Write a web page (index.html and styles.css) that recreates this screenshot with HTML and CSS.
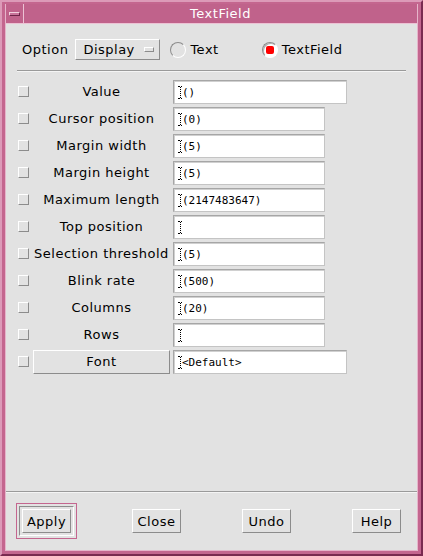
FILE: index.html
```html
<!DOCTYPE html>
<html lang="en">
<head>
    <meta charset="UTF-8">
    <title>TextField</title>
    <link rel="stylesheet" href="styles.css">
</head>
<body>
    <div class="window">
        <div class="inner">
            <div class="titlebar">
                <div class="menu-btn"><span class="menu-glyph"></span></div>
                <div class="title">TextField</div>
            </div>
            <div class="content">
                <div class="option-row">
                    <span class="option-label">Option</span>
                    <span class="option-menu">Display<span class="option-ind"></span></span>
                    <span class="radio first"></span><span class="radio-label">Text</span>
                    <span class="radio second on"><span class="radio-dot"></span></span><span class="radio-label">TextField</span>
                </div>
                <div class="sep"></div>

                <div class="rows">
                    <div class="row"><span class="check"></span><span class="label">Value</span><span class="field wide">()</span></div>
                    <div class="row"><span class="check"></span><span class="label">Cursor position</span><span class="field">(0)</span></div>
                    <div class="row"><span class="check"></span><span class="label">Margin width</span><span class="field">(5)</span></div>
                    <div class="row"><span class="check"></span><span class="label">Margin height</span><span class="field">(5)</span></div>
                    <div class="row"><span class="check"></span><span class="label">Maximum length</span><span class="field">(2147483647)</span></div>
                    <div class="row"><span class="check"></span><span class="label">Top position</span><span class="field"></span></div>
                    <div class="row"><span class="check"></span><span class="label">Selection threshold</span><span class="field">(5)</span></div>
                    <div class="row"><span class="check"></span><span class="label">Blink rate</span><span class="field">(500)</span></div>
                    <div class="row"><span class="check"></span><span class="label">Columns</span><span class="field">(20)</span></div>
                    <div class="row"><span class="check"></span><span class="label">Rows</span><span class="field"></span></div>
                    <div class="row"><span class="check"></span><span class="label button-label">Font</span><span class="field wide">&lt;Default&gt;</span></div>
                </div>

                <div class="actions">
                    <span class="default-ring"><span class="default-inner"><button class="btn">Apply</button></span></span>
                    <button class="btn">Close</button>
                    <button class="btn">Undo</button>
                    <button class="btn">Help</button>
                </div>
            </div>
        </div>
    </div>
</body>
</html>
```

FILE: styles.css
```css
html, body {
    margin: 0;
    padding: 0;
}
body {
    background-color: #c4668f;
    font-family: "DejaVu Sans", sans-serif;
    font-size: 13px;
    letter-spacing: 0.5px;
    color: #000;
}
.window {
    box-sizing: border-box;
    width: 423px;
    height: 556px;
    border: 2px solid;
    border-color: #dc9ab8 #7a2a50 #7a2a50 #dc9ab8;
    padding: 2px 3px 3px 3px;
    background-color: #c4668f;
}
.inner {
    box-sizing: border-box;
    height: 100%;
    border: 1px solid #e6b4ca;
    border-top: none;
    display: flex;
    flex-direction: column;
}
.titlebar {
    display: flex;
    height: 19px;
    border-bottom: 1px solid #ecc2d4;
    background-color: #c0628b;
}
.menu-btn {
    width: 17px;
    border-right: 1px solid #ecc2d4;
    display: flex;
    align-items: center;
    justify-content: center;
}
.menu-glyph {
    box-sizing: border-box;
    width: 11px;
    height: 4px;
    background-color: #c8739a;
    border: 1px solid;
    border-color: #f2d0de #6e2448 #6e2448 #f2d0de;
}
.title {
    flex: 1;
    text-align: center;
    color: #fff;
    line-height: 20px;
}
.content {
    flex: 1;
    background-color: #e2e2e2;
    display: flex;
    flex-direction: column;
}

/* option row */
.option-row {
    display: flex;
    align-items: center;
    height: 21px;
    margin-top: 15px;
    padding-left: 16px;
}
.option-menu {
    box-sizing: border-box;
    width: 85px;
    height: 21px;
    margin-left: 7px;
    padding-left: 7px;
    display: flex;
    align-items: center;
    border: 1px solid;
    border-color: #fff #8c8c8c #8c8c8c #fff;
}
.option-ind {
    box-sizing: border-box;
    width: 10px;
    height: 5px;
    margin-left: 9px;
    border: 1px solid;
    border-color: #fff #8c8c8c #8c8c8c #fff;
}
.radio {
    box-sizing: border-box;
    width: 16px;
    height: 16px;
    border-radius: 50%;
    border: 1px solid;
    border-color: #8c8c8c #fff #fff #8c8c8c;
    display: flex;
    align-items: center;
    justify-content: center;
}
.radio.first {
    margin-left: 10px;
}
.radio.second {
    margin-left: 43px;
}
.radio.on {
    background-color: #fff;
    box-shadow: inset 1px 1px 0 #b0b0b0;
}
.radio-dot {
    width: 8px;
    height: 8px;
    border-radius: 2px;
    background-color: #f00;
}
.radio-label {
    margin-left: 4px;
}
.sep {
    height: 1px;
    margin: 10px 11px 0 11px;
    background-color: #9a9a9a;
    border-bottom: 1px solid #f4f4f4;
}

/* property rows */
.rows {
    margin-top: 8px;
    display: flex;
    flex-direction: column;
    gap: 3px;
}
.row {
    display: flex;
    align-items: center;
    height: 24px;
    padding-left: 12px;
}
.check {
    box-sizing: border-box;
    width: 11px;
    height: 11px;
    margin-top: -2px;
    border: 1px solid;
    border-color: #fff #8c8c8c #8c8c8c #fff;
}
.label {
    box-sizing: border-box;
    width: 137px;
    height: 24px;
    margin-left: 4px;
    line-height: 24px;
    text-align: center;
    white-space: nowrap;
}
.button-label {
    border: 1px solid;
    border-color: #fff #8c8c8c #8c8c8c #fff;
    line-height: 22px;
}
.field {
    box-sizing: border-box;
    width: 152px;
    height: 24px;
    margin-left: 3px;
    padding-left: 4px;
    display: flex;
    align-items: center;
    background-color: #fff;
    border: 1px solid;
    border-color: #a6a6a6 #c4c4c4 #c4c4c4 #a6a6a6;
    box-shadow: inset 1px 1px 0 #d0d0d0;
    font-family: "DejaVu Sans Mono", monospace;
    font-size: 11px;
    letter-spacing: 0;
}
.field.wide {
    width: 174px;
}
.field::before {
    content: "";
    box-sizing: border-box;
    width: 4px;
    height: 13px;
    border-top: 1px dotted #000;
    border-bottom: 1px dotted #000;
    background: repeating-linear-gradient(to bottom, #000 0 1px, transparent 1px 2px) center / 1px 100% no-repeat;
}

/* bottom buttons */
.actions {
    margin-top: auto;
    height: 58px;
    padding: 0 16px;
    display: flex;
    align-items: center;
    justify-content: space-between;
    border-top: 1px solid #9a9a9a;
    box-shadow: inset 0 1px 0 #f4f4f4;
}
.btn {
    box-sizing: border-box;
    width: 49px;
    height: 24px;
    padding: 0;
    background-color: #e2e2e2;
    border: 1px solid;
    border-color: #fff #8c8c8c #8c8c8c #fff;
    font-family: "DejaVu Sans", sans-serif;
    font-size: 13px;
    letter-spacing: 0.5px;
    color: #000;
}
.default-ring {
    margin: -6px;
    padding: 2px;
    border: 1px solid #c4668f;
    display: flex;
}
.default-inner {
    padding: 2px;
    border: 1px solid;
    border-color: #8c8c8c #fff #fff #8c8c8c;
    display: flex;
}
```
